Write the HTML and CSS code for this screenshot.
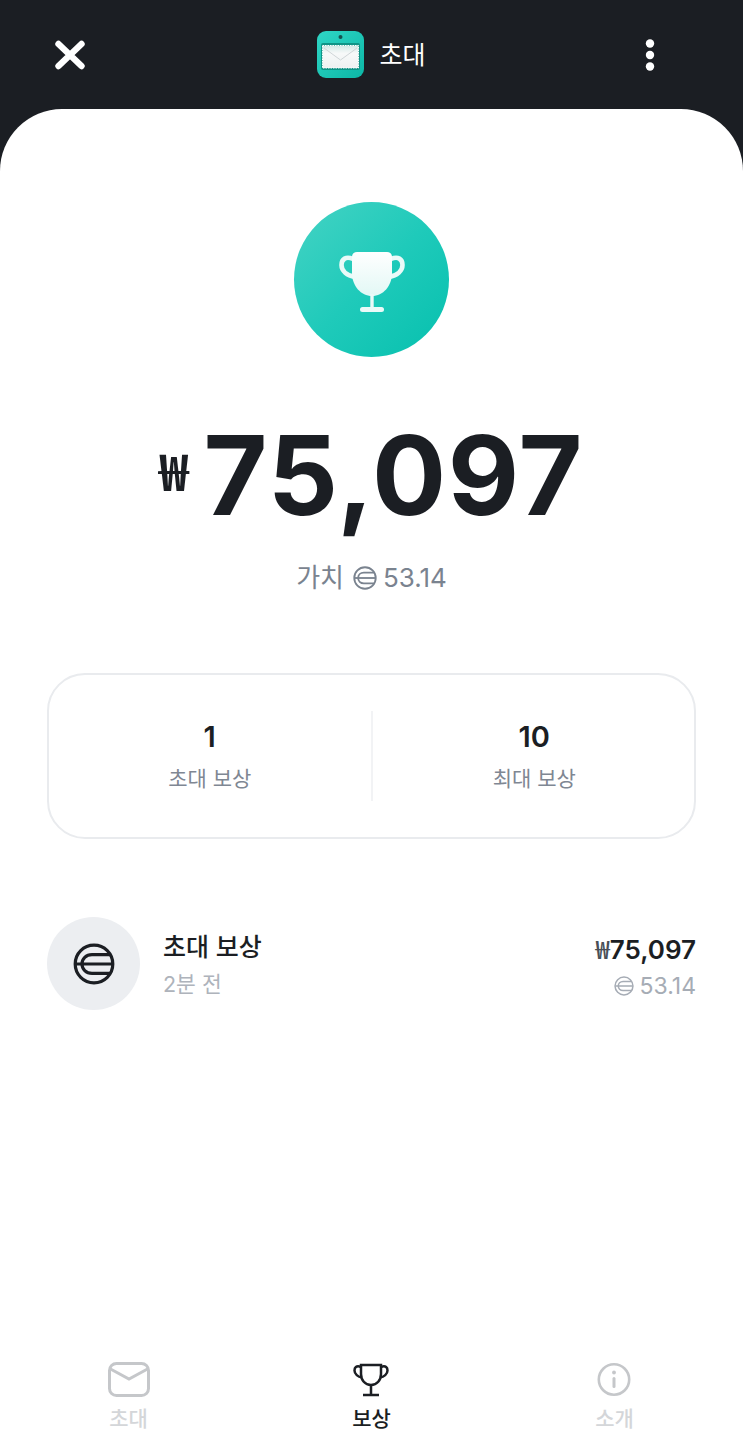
FILE: index.html
```html
<!DOCTYPE html>
<html lang="ko">
<head>
<meta charset="utf-8">
<title>초대</title>
<link rel="stylesheet" href="styles.css">
</head>
<body>
<svg class="defs" width="0" height="0" aria-hidden="true">
  <symbol id="coin" viewBox="0 0 42 42">
    <g fill="none" stroke="currentColor" stroke-width="3.2">
      <circle cx="21" cy="21" r="18.8"/>
      <path d="M3 21H39"/>
      <path d="M37 11.700H19C13 11.700 9 16 9 21S13 30.300 19 30.300H37"/>
    </g>
  </symbol>
</svg>
<div class="app">
  <header class="topbar">
    <button class="icon-btn close" aria-label="닫기">
      <svg width="32" height="30" viewBox="0 0 32 30"><path d="M4.500 4L27.500 26M27.500 4L4.500 26" fill="none" stroke="#fff" stroke-width="6.400" stroke-linecap="round"/></svg>
    </button>
    <div class="title">
      <svg class="app-icon" width="47" height="47" viewBox="0 0 47 47">
        <defs>
          <linearGradient id="tile" x1="0" y1="0" x2="1" y2="1"><stop offset="0" stop-color="#2fd6c5"/><stop offset="1" stop-color="#0cb7a6"/></linearGradient>
          <linearGradient id="paper" x1="0" y1="0" x2="0" y2="1"><stop offset="0" stop-color="#d3e9e6"/><stop offset=".35" stop-color="#f7f9f9"/><stop offset="1" stop-color="#eef1f1"/></linearGradient>
        </defs>
        <rect width="47" height="47" rx="9" fill="url(#tile)"/>
        <circle cx="23.500" cy="6" r="2" fill="#16514f"/>
        <rect x="4" y="12" width="39" height="27" rx="2" fill="#109486"/>
        <rect x="5.500" y="14.500" width="36" height="22.500" fill="url(#paper)" stroke="#fff" stroke-width="1" stroke-dasharray="1.500 1"/>
        <path d="M7 17L23.500 29L40 17" fill="none" stroke="#d0d6d8" stroke-width="1"/>
      </svg>
      <span class="title-text">초대</span>
    </div>
    <button class="icon-btn more" aria-label="더보기">
      <svg width="10" height="32" viewBox="0 0 10 32"><circle cx="5" cy="4.500" r="4.200" fill="#fff"/><circle cx="5" cy="16" r="4.200" fill="#fff"/><circle cx="5" cy="27.500" r="4.200" fill="#fff"/></svg>
    </button>
  </header>

  <main class="sheet">
    <div class="trophy-badge">
      <svg width="66" height="60" viewBox="0 0 66 60">
        <defs><linearGradient id="cup" x1="0" y1="0" x2="0" y2="1"><stop offset="0" stop-color="#fff"/><stop offset="1" stop-color="#e2f8f5"/></linearGradient></defs>
        <path d="M14 7C7 4 2.500 7 2.500 13C2.500 19 8 23.500 16 25" fill="none" stroke="#eafaf8" stroke-width="4.600"/>
        <path d="M52 7C59 4 63.500 7 63.500 13C63.500 19 58 23.500 50 25" fill="none" stroke="#eafaf8" stroke-width="4.600"/>
        <path d="M18 0H48C51 0 53 2 53 5V21C53 34 44 44 33 44C22 44 13 34 13 21V5C13 2 15 0 18 0Z" fill="url(#cup)"/>
        <rect x="31.300" y="42" width="3.400" height="14" fill="#eafaf8"/>
        <rect x="21" y="55" width="24" height="5" rx="2.500" fill="#eafaf8"/>
      </svg>
    </div>

    <div class="amount"><span class="amount-cur">₩</span><span class="amount-num">75,097</span></div>
    <div class="worth">가치 <svg class="coin-sm"><use href="#coin"/></svg><span>53.14</span></div>

    <section class="stats">
      <div class="stat"><strong>1</strong><span>초대 보상</span></div>
      <div class="stat-line"></div>
      <div class="stat stat-end"><strong>10</strong><span>최대 보상</span></div>
    </section>

    <section class="row">
      <div class="avatar"><svg class="coin-lg"><use href="#coin"/></svg></div>
      <div class="row-main"><div class="row-title">초대 보상</div><div class="row-sub">2분 전</div></div>
      <div class="row-end">
        <div class="row-amount"><span class="won">₩</span>75,097</div>
        <div class="row-coin"><svg class="coin-xs"><use href="#coin"/></svg><span>53.14</span></div>
      </div>
    </section>

    <nav class="tabs">
      <div class="tab">
        <svg width="42" height="35" viewBox="0 0 42 35"><rect x="1.500" y="1.500" width="39" height="32" rx="7" fill="none" stroke="#c5c7ca" stroke-width="3"/><path d="M2.500 7L21 17L39.500 7" fill="none" stroke="#c5c7ca" stroke-width="3"/></svg>
        <span>초대</span>
      </div>
      <div class="tab active">
        <svg width="36" height="35" viewBox="0 0 36 35"><g fill="none" stroke="#1b1e23" stroke-width="2.500"><path d="M8 3H28V12C28 18 24 23 18 23C12 23 8 18 8 12Z"/><path d="M8 5C3 3 1.500 6 1.500 8.500C1.500 12 5 15 9 15.500"/><path d="M28 5C33 3 34.500 6 34.500 8.500C34.500 12 31 15 27 15.500"/><path d="M18 23V32M10 33H26"/></g></svg>
        <span>보상</span>
      </div>
      <div class="tab">
        <svg width="36" height="35" viewBox="0 0 36 35"><circle cx="18" cy="17.500" r="15.200" fill="none" stroke="#c5c7ca" stroke-width="2.600"/><circle cx="18" cy="10.500" r="1.900" fill="#c5c7ca"/><rect x="16.500" y="15" width="3" height="11" rx="1.500" fill="#c5c7ca"/></svg>
        <span>소개</span>
      </div>
    </nav>
  </main>
</div>
</body>
</html>
```
FILE: styles.css
```css
* { box-sizing: border-box; }
html, body { margin: 0; padding: 0; }
body {
  width: 743px;
  height: 1449px;
  overflow: hidden;
  background: #1b1e23;
  font-family: Inter, "Noto Sans CJK KR", sans-serif;
  color: #1b1e23;
}
.defs { position: absolute; }
.app { display: flex; flex-direction: column; height: 1449px; }

.topbar {
  height: 109px;
  flex: none;
  display: grid;
  grid-template-columns: 1fr auto 1fr;
  align-items: center;
}
.icon-btn {
  display: flex;
  background: none;
  border: 0;
  padding: 0;
}
.close { justify-self: start; margin-left: 54px; }
.more { justify-self: end; margin-right: 88px; }
.title { display: flex; align-items: center; gap: 15px; }
.app-icon { display: block; }
.title-text { color: #fff; font-size: 25px; line-height: 30px; }

.sheet {
  flex: 1;
  background: #fff;
  border-radius: 62px 62px 0 0;
  display: flex;
  flex-direction: column;
  align-items: center;
  padding: 93px 47px 0;
}

.trophy-badge {
  width: 155px;
  height: 155px;
  border-radius: 50%;
  background: linear-gradient(135deg, #45d3c4 0%, #1fcaba 50%, #06c0ae 100%);
  display: flex;
  align-items: center;
  justify-content: center;
  padding-top: 4px;
}

.amount {
  margin-top: 51px;
  display: flex;
  align-items: center;
  height: 134px;
  gap: 15px;
}
.amount-cur {
  font-family: "Noto Sans CJK KR", sans-serif;
  font-size: 50px;
  font-weight: 700;
  line-height: 50px;
  margin-top: -13px;
}
.amount-num { font-size: 110px; font-weight: 700; line-height: 134px; letter-spacing: 1.500px; }

.worth {
  margin-top: 21px;
  display: flex;
  align-items: center;
  gap: 9px;
  font-size: 26px;
  line-height: 30px;
  color: #7a838f;
}
.worth span { margin-left: -3px; }
.coin-sm { width: 24px; height: 24px; display: block; }

.stats {
  margin-top: 80px;
  width: 649px;
  height: 166px;
  border: 2px solid #e9ebee;
  border-radius: 38px;
  display: grid;
  grid-template-columns: 1fr 2px 1fr;
  align-items: center;
}
.stat {
  display: flex;
  flex-direction: column;
  align-items: center;
  gap: 9px;
}
.stat-end { padding-left: 2px; }
.stat-line { height: 90px; background: #f2f3f5; }
.stat strong { font-size: 29px; font-weight: 600; line-height: 36px; }
.stat span { font-size: 21px; line-height: 30px; color: #7f8793; }

.row {
  margin-top: 78px;
  width: 649px;
  display: flex;
  align-items: center;
}
.avatar {
  width: 93px;
  height: 93px;
  border-radius: 50%;
  background: #eceef1;
  display: flex;
  align-items: center;
  justify-content: center;
  flex: none;
}
.coin-lg { width: 42px; height: 42px; display: block; color: #1b1e23; }
.row-main { margin-left: 23px; flex: 1; padding-top: 2px; }
.row-title { font-size: 25px; font-weight: 500; line-height: 32px; }
.row-sub { font-size: 21.500px; line-height: 30px; color: #aeb3bb; margin-top: 6px; }
.row-end { display: flex; flex-direction: column; align-items: flex-end; gap: 6px; padding-top: 5px; }
.row-amount { font-size: 26px; font-weight: 600; line-height: 32px; display: flex; align-items: baseline; }
.won { font-family: "Noto Sans CJK KR", sans-serif; color: #4a4f57; font-weight: 500; font-size: 25px; }
.row-coin { display: flex; align-items: center; gap: 5px; font-size: 23px; line-height: 28px; color: #a6acb5; }
.coin-xs { width: 20px; height: 20px; display: block; }

.tabs {
  margin: auto -40px 14px;
  align-self: stretch;
  display: grid;
  grid-template-columns: 1fr 1fr 1fr;
  justify-items: center;
}
.tab {
  display: flex;
  flex-direction: column;
  align-items: center;
  gap: 6px;
  font-size: 21px;
  line-height: 32px;
  color: #d4d6d9;
  font-weight: 500;
}
.tab.active { color: #1b1e23; }
```
